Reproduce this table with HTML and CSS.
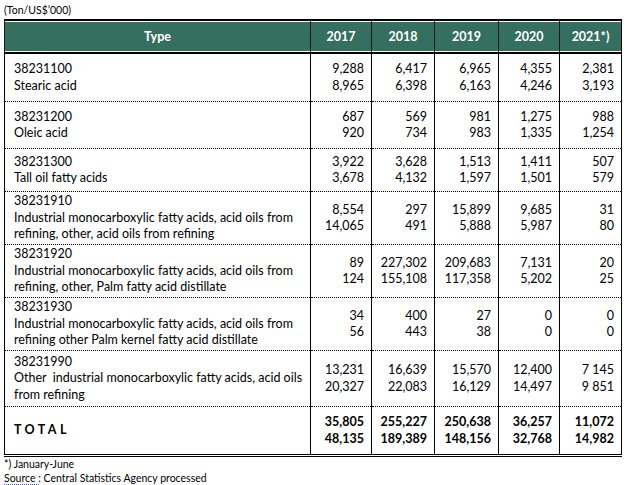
FILE: index.html
```html
<!DOCTYPE html>
<html>
<head>
<meta charset="utf-8">
<link rel="stylesheet" href="styles.css">
</head>
<body>
<div class="page">
  <div class="unit">(Ton/US$’000)</div>
  <table class="data">
    <colgroup>
      <col class="c-type"><col class="c-y1"><col class="c-y2"><col class="c-y3"><col class="c-y4"><col class="c-y5">
    </colgroup>
    <thead>
      <tr><th>Type</th><th>2017</th><th>2018</th><th>2019</th><th>2020</th><th>2021*)</th></tr>
    </thead>
    <tbody>
      <tr class="r48a">
        <td class="type">38231100<br>Stearic acid</td>
        <td class="num">9,288<br>8,965</td><td class="num">6,417<br>6,398</td><td class="num">6,965<br>6,163</td><td class="num">4,355<br>4,246</td><td class="num">2,381<br>3,193</td>
      </tr>
      <tr class="r48b">
        <td class="type">38231200<br>Oleic acid</td>
        <td class="num">687<br>920</td><td class="num">569<br>734</td><td class="num">981<br>983</td><td class="num">1,275<br>1,335</td><td class="num">988<br>1,254</td>
      </tr>
      <tr class="r43">
        <td class="type">38231300<br>Tall oil fatty acids</td>
        <td class="num">3,922<br>3,678</td><td class="num">3,628<br>4,132</td><td class="num">1,513<br>1,597</td><td class="num">1,411<br>1,501</td><td class="num">507<br>579</td>
      </tr>
      <tr class="r53">
        <td class="type">38231910<br>Industrial monocarboxylic fatty acids, acid oils from<br>refining, other, acid oils from refining</td>
        <td class="num">8,554<br>14,065</td><td class="num">297<br>491</td><td class="num">15,899<br>5,888</td><td class="num">9,685<br>5,987</td><td class="num">31<br>80</td>
      </tr>
      <tr class="r53">
        <td class="type">38231920<br>Industrial monocarboxylic fatty acids, acid oils from<br>refining, other, Palm fatty acid distillate</td>
        <td class="num">89<br>124</td><td class="num">227,302<br>155,108</td><td class="num">209,683<br>117,358</td><td class="num">7,131<br>5,202</td><td class="num">20<br>25</td>
      </tr>
      <tr class="r53">
        <td class="type">38231930<br>Industrial monocarboxylic fatty acids, acid oils from<br>refining other Palm kernel fatty acid distillate</td>
        <td class="num">34<br>56</td><td class="num">400<br>443</td><td class="num">27<br>38</td><td class="num">0<br>0</td><td class="num">0<br>0</td>
      </tr>
      <tr class="r55">
        <td class="type">38231990<br>Other&nbsp; industrial monocarboxylic fatty acids, acid oils<br>from refining</td>
        <td class="num">13,231<br>20,327</td><td class="num">16,639<br>22,083</td><td class="num">15,570<br>16,129</td><td class="num">12,400<br>14,497</td><td class="num">7 145<br>9 851</td>
      </tr>
      <tr class="r50 total">
        <td class="type total-label">TOTAL</td>
        <td class="num">35,805<br>48,135</td><td class="num">255,227<br>189,389</td><td class="num">250,638<br>148,156</td><td class="num">36,257<br>32,768</td><td class="num">11,072<br>14,982</td>
      </tr>
    </tbody>
  </table>
  <div class="note">*) January-June</div>
  <div class="note"><span class="squiggle">Source :</span> Central Statistics Agency processed</div>
</div>
</body>
</html>
```
FILE: styles.css
```css
html, body {
  margin: 0;
  padding: 0;
  background: #fff;
}
body {
  font-family: Lato, "Liberation Sans", sans-serif;
  color: #000;
}
.page {
  padding: 4px 0 0 4px;
  width: 620px;
}
.unit {
  font-size: 10.5px;
  line-height: 12px;
  height: 15px;
}
.data {
  border-collapse: collapse;
  table-layout: fixed;
  width: 618px;
  font-size: 12.5px;
  border-top: 2px solid #000;
  border-bottom: 3px double #000;
  border-left: 1px solid #000;
  border-right: 1px solid #000;
}
.c-type { width: 306px; }
.c-y1 { width: 61px; }
.c-y2 { width: 63px; }
.c-y3 { width: 64px; }
.c-y4 { width: 61px; }
.c-y5 { width: 62px; }
.data th {
  background: #346f5f;
  color: #fff;
  font-weight: 700;
  font-size: 12.5px;
  height: 31px;
  padding: 0;
  text-align: center;
  border-left: 1px solid #1a1a1a;
  border-bottom: 2px solid #000;
  box-shadow: inset 0 1px 0 #fff, inset 0 -1px 0 #fff;
}
.data td {
  padding: 0;
  line-height: 16.5px;
  vertical-align: middle;
  border-left: 1px solid #000;
  border-bottom: 1px dotted #000;
  white-space: nowrap;
}
.data tr.total td {
  border-bottom: none;
  font-weight: 700;
}
.type {
  padding-left: 9px !important;
}
.num {
  text-align: right;
  padding-right: 7px !important;
}
.total-label {
  letter-spacing: 3.4px;
}
.r48a td { height: 47px; }
.r48b td { height: 46px; }
.r43 td { height: 42px; }
.r53 td { height: 52px; }
.r55 td { height: 55px; }
.r50 td { height: 47px; }
.note {
  font-size: 10.5px;
  line-height: 14px;
}
.squiggle {
  text-decoration: underline dotted #3355cc;
  text-underline-offset: 2px;
}
```
